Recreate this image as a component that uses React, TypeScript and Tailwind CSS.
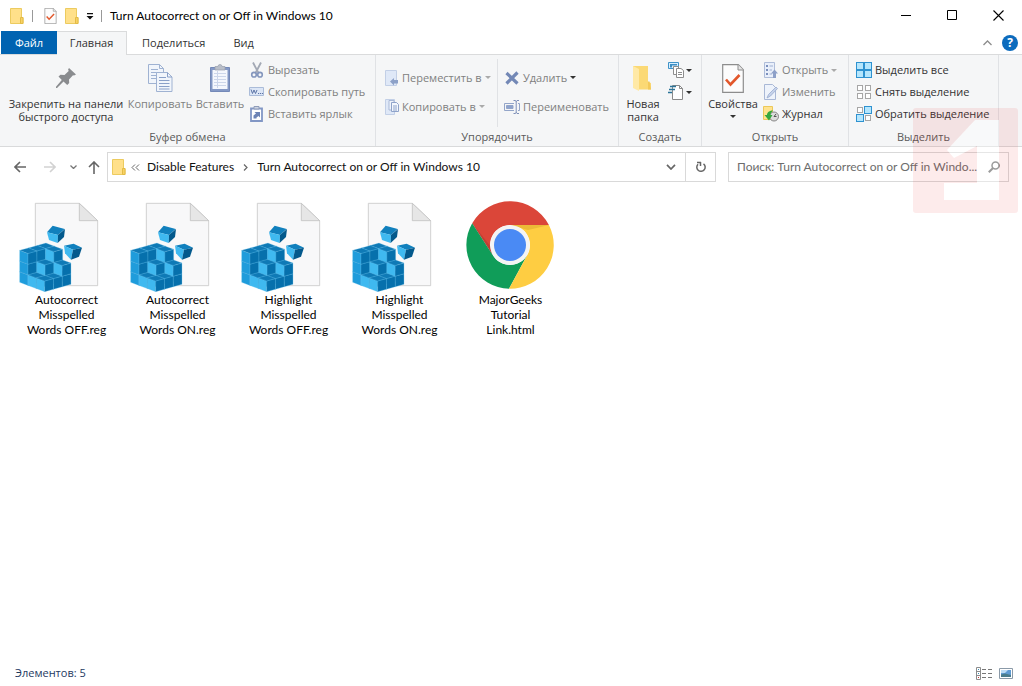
import { ReactNode } from 'react';

const tabs = ['Поделиться', 'Вид'];

interface FileItem {
  name: string;
  lines: string[];
  kind: 'reg' | 'html';
}

const files: FileItem[] = [
  { name: 'off-autocorrect', lines: ['Autocorrect', 'Misspelled', 'Words OFF.reg'], kind: 'reg' },
  { name: 'on-autocorrect', lines: ['Autocorrect', 'Misspelled', 'Words ON.reg'], kind: 'reg' },
  { name: 'off-highlight', lines: ['Highlight', 'Misspelled', 'Words OFF.reg'], kind: 'reg' },
  { name: 'on-highlight', lines: ['Highlight', 'Misspelled', 'Words ON.reg'], kind: 'reg' },
  { name: 'link', lines: ['MajorGeeks', 'Tutorial', 'Link.html'], kind: 'html' },
];

/* ---------- small icons ---------- */

function SmallFolder() {
  return (
    <svg className="h-4 w-[14px] shrink-0" viewBox="0 0 14 16">
      <path d="M.5.5h11v9h1.500v6H.5z" fill="#ffe08a" stroke="#eccb5f" />
      <path d="M10.500 9.500h2.500v6h-2.500z" fill="#f8d264" stroke="#e3bb46" />
    </svg>
  );
}

function CheckedPage({ className }: { className: string }) {
  return (
    <svg className={className} viewBox="0 0 22 29">
      <path d="M.7.7h15.600l5 5v22.600H.7z" fill="#fcfcfc" stroke="#8d8d8d" strokeWidth="1.200" />
      <path d="M16 .7v5.300h5.300" fill="#e6e6e6" stroke="#8d8d8d" />
      <path d="M4 15.500l4.500 5L17.500 11" fill="none" stroke="#e2572b" strokeWidth="2.600" />
    </svg>
  );
}

function Caret({ className = 'text-[#333]' }: { className?: string }) {
  return (
    <svg className={`h-[3px] w-[6px] shrink-0 ${className}`} viewBox="0 0 6 3">
      <path d="M0 0h6L3 3z" fill="currentColor" />
    </svg>
  );
}

function PinIcon() {
  return (
    <svg className="h-5 w-5" viewBox="0 0 20 20">
      <path d="M13 0l7 6.500-2 1-1-.3-4 4.200.2 3.600-2 2L7.500 13.500 1 20H0v-1.200L5.800 12 2.500 8.500l2-1.800 4 .3 4.200-4-.6-1.500z" fill="#8a8c8f" />
    </svg>
  );
}

function CopyIcon() {
  return (
    <svg className="h-7 w-[25px]" viewBox="0 0 25 28" fill="#f1f5fb" stroke="#9fb2d2">
      <path d="M.5.5h11l4 4v15H.5z" />
      <path d="M11.500.5v4h4M3 5.500h7M3 8.500h9M3 11.500h9M3 14.500h9" fill="none" />
      <path d="M8.500 8.500h11l4.500 4.500v14.500H8.500z" />
      <path d="M19.500 8.500V13H24M11 13.500h7M11 16.500h10.500M11 19.500h10.500M11 22.500h10.500M11 25h10.500" fill="none" stroke="#8aa0c8" />
    </svg>
  );
}

function PasteIcon() {
  return (
    <svg className="h-7 w-5" viewBox="0 0 20 28">
      <path d="M.5 3.500h19v24H.5z" fill="#8499c6" stroke="#7489b8" />
      <path d="M2.500 6h15v19h-15z" fill="#f4f7fd" />
      <path d="M4 9.500h12M4 12.500h12M4 15.500h12M4 18.500h12M4 21.500h12M7.500 7v17" stroke="#ccd6ea" />
      <path d="M5 2.500h3a2 2 0 014 0h3V6H5z" fill="#b9bec8" stroke="#989fae" strokeWidth=".7" />
    </svg>
  );
}

function CutIcon() {
  return (
    <svg className="h-4 w-4" viewBox="0 0 16 16" fill="none">
      <path d="M4 .5l5.500 10.500M12 .5L6.500 11" stroke="#a3a9b5" strokeWidth="1.800" />
      <circle cx="5" cy="12.700" r="2.300" stroke="#8496bd" strokeWidth="1.600" />
      <circle cx="11" cy="12.700" r="2.300" stroke="#8496bd" strokeWidth="1.600" />
    </svg>
  );
}

function CopyPathIcon() {
  return (
    <svg className="h-4 w-4" viewBox="0 0 16 16">
      <path d="M.5 3.500h14v8H.5z" fill="#dce6f6" stroke="#abbcd9" />
      <path d="M2 5.500l1.500 4L5 6l1.500 3.500L8 6M9 9.500h1.200M11 9.500h1.200M13 9.500h1" fill="none" stroke="#5d74a6" />
    </svg>
  );
}

function ShortcutIcon() {
  return (
    <svg className="h-4 w-4" viewBox="0 0 16 16">
      <path d="M2 2.500h11v12.500H2z" fill="#fff" stroke="#8297c5" strokeWidth="1.800" />
      <path d="M5 .5h5V3H5z" fill="#cdd4e2" stroke="#8f9cb8" />
      <path d="M4.500 12.500V9.500L7 7.500 5.500 6H11v5.500L9.500 10l-2 1.500v1z" fill="#6c83b5" />
    </svg>
  );
}

function MoveToIcon() {
  return (
    <svg className="h-4 w-[14px]" viewBox="0 0 14 16">
      <path d="M.5.5h11v15H.5z" fill="#dfe8f7" stroke="#c2cfe6" />
      <path d="M5 11.500L9 8v2h4v3.500H9v2z" fill="#8da1c8" />
    </svg>
  );
}

function CopyToIcon() {
  return (
    <svg className="h-4 w-[14px]" viewBox="0 0 14 16">
      <path d="M.5.5h9v15h-9z" fill="#dfe8f7" stroke="#c2cfe6" />
      <path d="M4 1.500h5V11H4z" fill="#f0f4fb" stroke="#a9b9d7" />
      <path d="M6.500 3.500h5l2 2v7h-7zM8 7h4M8 9h4M8 11h4" fill="#f3f7fd" stroke="#8fa3ca" />
    </svg>
  );
}

function DeleteIcon() {
  return (
    <svg className="h-4 w-4" viewBox="-1 0 16 16">
      <path d="M1.500 3l11 10.500M12.500 2.500l-11 11" stroke="#7388b6" strokeWidth="3.200" />
    </svg>
  );
}

function RenameIcon() {
  return (
    <svg className="h-4 w-4" viewBox="0 0 16 16" fill="none" stroke="#93a5c9">
      <path d="M10 4.500H.5v7H10M14 4.500h1.500v7H14" />
      <path d="M2.500 6.500H9v3H2.500z" fill="#8ea3ce" />
      <path d="M9.500 1.500h2l.7 1 .8-1h2M12.200 2v12M9.500 14.500h2l.7-1 .8 1h2" stroke="#7e90b8" />
    </svg>
  );
}

function NewFolderIcon() {
  return (
    <svg className="h-[26px] w-5" viewBox="1 0 20 26">
      <path d="M1 1h15v16l3 1v6.500H7L1 22z" fill="#fbd975" />
      <path d="M1 1l6 3v22l-6-3z" fill="#ffe9a6" />
      <path d="M16 16.500h1.500l1.500 8h-3z" fill="#f3c95a" />
    </svg>
  );
}

function NewItemIcon() {
  return (
    <svg className="h-4 w-4" viewBox="0 0 16 16">
      <path d="M.5.5h10v6H.5z" fill="#d8efff" stroke="#3f93c8" />
      <path d="M2 2h7v1.500H4v2H2z" fill="#3e8fc4" />
      <path d="M5.500 4.500h5v8h-5z" fill="#fff" stroke="#8d8d8d" />
      <path d="M8.500 6.500H13l2.500 2v7h-7zM10 10.500h4M10 12.500h4" fill="#fff" stroke="#8d8d8d" />
    </svg>
  );
}

function EasyAccessIcon() {
  return (
    <svg className="h-4 w-4" viewBox="0 0 16 16">
      <path d="M4.500 1.500h7l3 3v11h-10z" fill="#fff" stroke="#8a8a8a" />
      <path d="M11.500 1.500v3h3" fill="none" stroke="#8a8a8a" />
      <path d="M2 2.500h6M1 5.500h6M0 8.500h4" stroke="#2b7499" strokeWidth="1.300" />
    </svg>
  );
}

function OpenIcon() {
  return (
    <svg className="h-4 w-4" viewBox="0 0 16 16">
      <path d="M1.500.5h10v15h-10z" fill="#e9effa" stroke="#afbdd9" />
      <path d="M3 3h2v2H3zM3 7h2v2H3zM3 11h2v2H3z" fill="#7b90bd" />
      <path d="M6.500 4H10M6.500 8H9M6.500 12H9" stroke="#9fb0d2" />
      <path d="M11.500 7.500l3.500 4h-2V16h-3v-4.500H8z" fill="#8da0c8" />
    </svg>
  );
}

function EditIcon() {
  return (
    <svg className="h-4 w-4" viewBox="0 0 16 16">
      <path d="M1.500.5h8l3 3v12h-11z" fill="#eef3fb" stroke="#a9b8d6" />
      <path d="M4 14l1.500-3.500L13 3l1.500 1.500L7.500 12z" fill="#c5d2ea" stroke="#9aaccf" strokeWidth=".8" />
    </svg>
  );
}

function HistoryIcon() {
  return (
    <svg className="h-4 w-4" viewBox="0 0 16 16">
      <path d="M.5.5h9v13h-9z" fill="#ffe38f" stroke="#ecc85a" />
      <circle cx="11" cy="10.500" r="4.500" fill="#dcdcdc" stroke="#858585" />
      <path d="M11 10.500l2-2.500M11 10.500h2.500" stroke="#555" />
      <path d="M10 4.500C5.500 4.500 4 7 4 9H1.500L6 14.500 9.500 9H7.500c0-1.500 1-3 2.500-4.500z" fill="#35a83f" />
    </svg>
  );
}

// four tiles; `on` lists the highlighted ones
function TilesIcon({ on }: { on: number[] }) {
  const spots = [[0, 0], [8, 0], [0, 8], [8, 8]];
  return (
    <svg className="h-4 w-4" viewBox="0 0 16 16">
      {spots.map(([x, y], i) =>
        on.includes(i) ? (
          <rect key={i} x={x + 0.5} y={y + 0.5} width="7" height="7" fill="#b5e6fd" stroke="#2e92d0" />
        ) : (
          <rect key={i} x={x + 1.5} y={y + 1.5} width="5" height="5" fill="#fff" stroke="#a6a6a6" />
        ),
      )}
    </svg>
  );
}

/* ---------- large icons ---------- */

// cube stack: p runs to the left, q to the right, r upwards from the front corner
function cubeFaces(p: number, q: number, r: number) {
  const x = 134 - p * 25 + q * 26.3;
  const y = 290 - p * 9.3 - q * 7.3 - r * 32;
  return {
    left: `${x},${y} ${x - 25},${y - 9.3} ${x - 25},${y - 41.3} ${x},${y - 32}`,
    right: `${x},${y} ${x + 26.3},${y - 7.3} ${x + 26.3},${y - 39.3} ${x},${y - 32}`,
    top: `${x},${y - 32} ${x - 25},${y - 41.3} ${x + 1.3},${y - 48.6} ${x + 26.3},${y - 39.3}`,
  };
}

const cubes: number[][] = [];
for (let r = 0; r < 3; r++) {
  for (let p = 2; p >= 0; p--) {
    for (let q = 2; q >= 0; q--) {
      if (r === 0 || (r === 1 && p + q >= 2) || (r === 2 && (p === 2 || (p === 1 && q === 2)))) {
        cubes.push([p, q, r]);
      }
    }
  }
}

function RegIcon() {
  return (
    <svg className="h-[91px] w-24" viewBox="57 18 288 273">
      <path d="M106 25h132l55 52v195H106z" fill="#f8f8f9" stroke="#c9c9c9" strokeWidth="2.500" />
      <path d="M238 25v52h55z" fill="#e6e6e6" stroke="#c3c3c3" strokeWidth="2.500" />
      <g stroke="#6cc3ec" strokeWidth=".8" strokeLinejoin="round">
        {cubes.map(([p, q, r]) => {
          const f = cubeFaces(p, q, r);
          return (
            <g key={`${p}${q}${r}`}>
              <polygon points={f.left} fill={p === 2 ? '#1f9cdb' : '#3fb9f0'} />
              <polygon points={f.right} fill="#0670ac" />
              <polygon points={f.top} fill="#0f7ab6" />
            </g>
          );
        })}
      </g>
      <path d="M158 92l36 10-20 18-33-8z" fill="#1180bd" />
      <path d="M141 112l33 8-1 24-26-9z" fill="#3fb9f0" />
      <path d="M174 120l21-18-3 24-19 18z" fill="#03598c" />
      <path d="M192 152l29-6 25 12-27 6z" fill="#1180bd" />
      <path d="M192 152l27 12-6 30-18-19z" fill="#3fb9f0" />
      <path d="M219 164l27-6-9 27-24 9z" fill="#03598c" />
    </svg>
  );
}

function ChromeIcon() {
  return (
    <svg className="h-[91px] w-24" viewBox="-3 0 96 91">
      <path d="M6.200 22.200A43.700 43.700 0 0182.900 24H44a20 20 0 00-17.300 30z" fill="#db4639" />
      <path d="M6.200 22.200L26.700 54a20 20 0 0034.600 0L43 87.700A43.700 43.700 0 016.200 22.200z" fill="#109d59" />
      <path d="M82.900 24H44a20 20 0 0117.300 30L43 87.700A43.700 43.700 0 0082.900 24z" fill="#fecd42" />
      <path d="M6.200 22.200L26.700 54l-2.500-9z" fill="#a5392f" opacity=".5" />
      <path d="M44 24h38.900L62 29z" fill="#d9a72c" opacity=".5" />
      <circle cx="44" cy="44" r="19.700" fill="#f4f4f4" />
      <circle cx="44" cy="44" r="16" fill="#4a8af4" />
    </svg>
  );
}

/* ---------- ribbon parts ---------- */

function RibbonGroup({ label, className, children }: { label: string; className: string; children: ReactNode }) {
  return (
    <section className={`flex shrink-0 flex-col border-r border-[#e0e2e5] pt-1 ${className}`}>
      <div className="flex h-[68px]">{children}</div>
      <h2 className="mt-[2px] text-center text-[#5a5a5a]">{label}</h2>
    </section>
  );
}

function BigButton({ icon, lines, className = '', disabled }: { icon: ReactNode; lines: string[]; className?: string; disabled?: boolean }) {
  return (
    <button disabled={disabled} className={`flex shrink-0 flex-col items-center leading-[13px] whitespace-nowrap ${disabled ? 'text-[#808080]' : 'text-[#333]'} ${className}`}>
      <span className="flex h-[38px] items-center">{icon}</span>
      {lines.map((line) => (
        <span key={line}>{line}</span>
      ))}
    </button>
  );
}

function SmallButton({ icon, label, disabled, caret, tall }: { icon: ReactNode; label: string; disabled?: boolean; caret?: string; tall?: boolean }) {
  return (
    <button disabled={disabled} className={`flex items-center gap-[3px] whitespace-nowrap ${tall ? 'h-[29px]' : 'h-[22px]'} ${disabled ? 'text-[#808080]' : 'text-[#333]'}`}>
      {icon}
      {label}
      {caret && <Caret className={caret} />}
    </button>
  );
}

function Ribbon() {
  return (
    <div className="flex h-[92px] overflow-hidden border-b border-[#d9dadb] bg-[#f5f6f7] text-[11px] leading-4">
      <RibbonGroup label="Буфер обмена" className="w-[376px]">
        <BigButton icon={<PinIcon />} lines={['Закрепить на панели', 'быстрого доступа']} className="ml-1 w-[124px]" />
        <BigButton icon={<CopyIcon />} lines={['Копировать']} className="w-16" disabled />
        <BigButton icon={<PasteIcon />} lines={['Вставить']} className="w-14" disabled />
        <div className="ml-[1px] flex flex-col">
          <SmallButton icon={<CutIcon />} label="Вырезать" disabled />
          <SmallButton icon={<CopyPathIcon />} label="Скопировать путь" disabled />
          <SmallButton icon={<ShortcutIcon />} label="Вставить ярлык" disabled />
        </div>
      </RibbonGroup>
      <RibbonGroup label="Упорядочить" className="w-[243px]">
        <div className="ml-[9px] flex w-[113px] flex-col border-r border-[#e0e2e5] pt-1">
          <SmallButton icon={<MoveToIcon />} label="Переместить в" caret="text-[#aaa]" disabled tall />
          <SmallButton icon={<CopyToIcon />} label="Копировать в" caret="text-[#aaa]" disabled tall />
        </div>
        <div className="ml-[6px] flex flex-col pt-1">
          <SmallButton icon={<DeleteIcon />} label="Удалить" caret="text-[#333]" disabled tall />
          <SmallButton icon={<RenameIcon />} label="Переименовать" disabled tall />
        </div>
      </RibbonGroup>
      <RibbonGroup label="Создать" className="w-[83px]">
        <BigButton icon={<NewFolderIcon />} lines={['Новая', 'папка']} className="ml-1 w-[40px]" />
        <div className="ml-[5px] flex flex-col">
          <button aria-label="Создать элемент" className="flex h-[22px] items-center gap-[2px]"><NewItemIcon /><Caret /></button>
          <button aria-label="Простой доступ" className="flex h-[22px] items-center gap-[2px]"><EasyAccessIcon /><Caret /></button>
        </div>
      </RibbonGroup>
      <RibbonGroup label="Открыть" className="w-[147px]">
        <div className="ml-1 flex w-[54px] flex-col items-center">
          <BigButton icon={<CheckedPage className="h-[29px] w-[22px]" />} lines={['Свойства']} />
          <span className="flex h-[13px] items-center"><Caret /></span>
        </div>
        <div className="ml-[3px] flex flex-col">
          <SmallButton icon={<OpenIcon />} label="Открыть" caret="text-[#aaa]" disabled />
          <SmallButton icon={<EditIcon />} label="Изменить" disabled />
          <SmallButton icon={<HistoryIcon />} label="Журнал" />
        </div>
      </RibbonGroup>
      <RibbonGroup label="Выделить" className="w-[150px]">
        <div className="ml-[7px] flex flex-col">
          <SmallButton icon={<TilesIcon on={[0, 1, 2, 3]} />} label="Выделить все" />
          <SmallButton icon={<TilesIcon on={[]} />} label="Снять выделение" />
          <SmallButton icon={<TilesIcon on={[1, 2]} />} label="Обратить выделение" />
        </div>
      </RibbonGroup>
    </div>
  );
}

/* ---------- window parts ---------- */

function TitleBar() {
  return (
    <header className="flex h-[31px] items-center pr-px pl-[10px] font-['Lato','Open_Sans',sans-serif] text-[12px] text-black">
      <SmallFolder />
      <span className="ml-2 h-3 w-px bg-[#999]" />
      <CheckedPage className="ml-[11px] h-4 w-[13px]" />
      <span className="ml-2"><SmallFolder /></span>
      <button aria-label="Настройка панели" className="ml-[7px]">
        <svg className="h-2 w-2" viewBox="0 0 8 8"><path d="M1 1h6v1.200H1zM.5 4h7L4 7.500z" fill="#111" /></svg>
      </button>
      <span className="ml-[7px] h-3 w-px bg-[#999]" />
      <h1 className="ml-2">Turn Autocorrect on or Off in Windows 10</h1>
      <div className="ml-auto flex">
        <button aria-label="Свернуть" className="flex w-[46px] justify-center">
          <svg className="h-[11px] w-[11px]" viewBox="0 0 11 11"><path d="M0 5.500h10" stroke="#000" /></svg>
        </button>
        <button aria-label="Развернуть" className="flex w-[46px] justify-center">
          <svg className="h-[11px] w-[11px]" viewBox="0 0 11 11"><path d="M.5.5h9v9h-9z" fill="none" stroke="#000" /></svg>
        </button>
        <button aria-label="Закрыть" className="flex w-[46px] justify-center">
          <svg className="h-[11px] w-[11px]" viewBox="0 0 11 11"><path d="M.5.5l10 10M10.500.5l-10 10" stroke="#000" strokeWidth="1.100" /></svg>
        </button>
      </div>
    </header>
  );
}

function TabBar() {
  return (
    <nav className="flex h-6 items-stretch border-b border-[#dadbdc] pl-px text-[11px]">
      <button className="w-14 bg-[#0063b1] pt-px text-white">Файл</button>
      <button className="mr-px -mb-px w-[70px] border-t border-r border-[#dadbdc] bg-[#f5f6f7] text-[#333]">Главная</button>
      {tabs.map((tab) => (
        <button key={tab} className="px-[14px] pt-px text-[#333]">{tab}</button>
      ))}
      <div className="ml-auto flex items-center gap-[10px] pr-1">
        <button aria-label="Свернуть ленту">
          <svg className="h-[6px] w-[9px]" viewBox="0 0 9 6"><path d="M.5 5L4.500 1l4 4" fill="none" stroke="#8c8c8c" strokeWidth="1.300" /></svg>
        </button>
        <button aria-label="Справка" className="flex h-4 w-4 items-center justify-center rounded-full bg-[#0c6bbd] text-[12px] font-bold text-white">?</button>
      </div>
    </nav>
  );
}

function AddressBar() {
  return (
    <div className="flex items-center py-[5px] pr-[13px] pl-[14px] font-['Lato','Open_Sans',sans-serif] text-[12px] text-[#111]">
      <button aria-label="Назад">
        <svg className="h-3 w-3" viewBox="0 0 12 12"><path d="M12 6H1M6 1L1 6l5 5" fill="none" stroke="#666" strokeWidth="1.600" /></svg>
      </button>
      <button aria-label="Вперёд" className="ml-[18px]">
        <svg className="h-3 w-3" viewBox="0 0 12 12"><path d="M0 6h11M6 1l5 5-5 5" fill="none" stroke="#d2d2d2" strokeWidth="1.600" /></svg>
      </button>
      <button aria-label="Последние расположения" className="ml-[14px]">
        <svg className="h-1 w-[7px]" viewBox="0 0 7 4"><path d="M.5.5l3 3 3-3" fill="none" stroke="#777" strokeWidth="1.300" /></svg>
      </button>
      <button aria-label="Вверх" className="ml-[11px]">
        <svg className="h-[13px] w-3" viewBox="0 0 12 13"><path d="M6 13V1M1 6l5-5 5 5" fill="none" stroke="#666" strokeWidth="1.600" /></svg>
      </button>
      <div className="ml-[7px] flex h-[30px] min-w-0 flex-1 items-center border border-[#d9d9d9] pl-1">
        <SmallFolder />
        <svg className="ml-[5px] h-[7px] w-[9px]" viewBox="0 0 9 7"><path d="M4 .5l-3 3 3 3M8 .5l-3 3 3 3" fill="none" stroke="#666" /></svg>
        <a href="#disable" className="ml-[7px]">Disable Features</a>
        <svg className="ml-[9px] h-[7px] w-[5px]" viewBox="0 0 5 7"><path d="M1 .5l3 3-3 3" fill="none" stroke="#666" strokeWidth="1.200" /></svg>
        <a href="#current" className="ml-[9px] whitespace-nowrap">Turn Autocorrect on or Off in Windows 10</a>
        <button aria-label="Предыдущие расположения" className="ml-auto px-[9px]">
          <svg className="h-[6px] w-[10px]" viewBox="0 0 10 6"><path d="M1 .8L5 5 9 .8" fill="none" stroke="#666" strokeWidth="1.700" /></svg>
        </button>
        <button aria-label="Обновить" className="flex w-[30px] items-center justify-center self-stretch border-l border-[#d9d9d9]">
          <svg className="h-3 w-3" viewBox="0 0 12 12">
            <path d="M8.500 2.800A4.200 4.200 0 113 3.200" fill="none" stroke="#666" strokeWidth="1.500" />
            <path d="M2 1.500h4M5.500 1v4" fill="none" stroke="#666" strokeWidth="1.500" />
          </svg>
        </button>
      </div>
      <div className="ml-3 flex h-[30px] w-[281px] items-center border border-[#d9d9d9] pr-2 pl-2">
        <input aria-label="Поиск" placeholder="Поиск: Turn Autocorrect on or Off in Windo..." className="min-w-0 flex-1 outline-none placeholder:text-[#6d6d6d]" />
        <svg className="ml-2 h-3 w-3" viewBox="0 0 12 12">
          <circle cx="7.500" cy="4.500" r="3.500" fill="none" stroke="#666" strokeWidth="1.500" />
          <path d="M5 7L.8 11.200" stroke="#666" strokeWidth="2" />
        </svg>
      </div>
    </div>
  );
}

function StatusBar() {
  return (
    <footer className="flex h-[25px] items-center px-[9px] pl-[15px] text-[11px] text-[#1e3a5f]">
      <span>Элементов: 5</span>
      <div className="ml-auto flex items-center gap-[7px]">
        <button aria-label="Таблица">
          <svg className="h-[13px] w-4" viewBox="0 0 16 13">
            <path d="M.5.5h4v12h-4zM.5 4.500h4M.5 8.500h4" fill="#fff" stroke="#8c8c8c" />
            <path d="M6 2.500h4M12 2.500h4M6 6.500h4M12 6.500h4M6 10.500h4M12 10.500h4" stroke="#777" />
            <path d="M2 2h1v1H2zM2 6h1v1H2z" fill="#3a8fb7" />
            <path d="M2 10h1v1H2z" fill="#c33" />
          </svg>
        </button>
        <button aria-label="Крупные значки">
          <svg className="h-[11px] w-[14px]" viewBox="0 0 14 11">
            <path d="M.5.5h13v10H.5z" fill="#fff" stroke="#8b9aa8" />
            <path d="M2 2h10v7H2z" fill="#5f9bd3" />
            <path d="M2 2h7L6 5H2z" fill="#bcdcf5" />
            <path d="M2 6.500l4-1 6 1.500v2H2z" fill="#4a7c8c" />
          </svg>
        </button>
      </div>
    </footer>
  );
}

export default function App() {
  return (
    <div className="relative flex min-h-screen flex-col bg-white font-['Open_Sans','Noto_Sans',sans-serif]">
      <TitleBar />
      <TabBar />
      <Ribbon />
      <AddressBar />
      <main className="flex-1 pt-[14px] pl-[11px]">
        <ul className="flex flex-wrap">
          {files.map((file) => (
            <li key={file.name}>
              <button className="flex w-[111px] flex-col items-center font-['Lato','Open_Sans',sans-serif] text-[12px] leading-[15px] text-black">
                {file.kind === 'reg' ? <RegIcon /> : <ChromeIcon />}
                {file.lines.map((line) => (
                  <span key={line}>{line}</span>
                ))}
              </button>
            </li>
          ))}
        </ul>
      </main>
      <StatusBar />
      {/* translucent logo stamp over the corner */}
      <svg className="pointer-events-none absolute top-[108px] right-1 h-[105px] w-[105px]" viewBox="0 0 105 105">
        <path d="M62 12h24v80H31V75h33V38L41 50l-7-8z" fill="#fff" fillOpacity=".35" />
        <path fillRule="evenodd" d="M3 0h99a3 3 0 013 3v99a3 3 0 01-3 3H3a3 3 0 01-3-3V3a3 3 0 013-3zM62 12h24v80H31V75h33V38L41 50l-7-8z" fill="#ee1c25" fillOpacity=".09" />
      </svg>
    </div>
  );
}
